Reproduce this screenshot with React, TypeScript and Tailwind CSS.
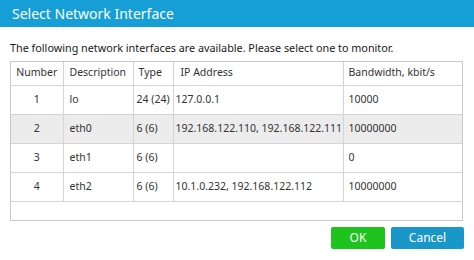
const ROWS = [
  { num: "1", desc: "lo", type: "24 (24)", ip: "127.0.0.1", bw: "10000" },
  { num: "2", desc: "eth0", type: "6 (6)", ip: "192.168.122.110, 192.168.122.111", bw: "10000000" },
  { num: "3", desc: "eth1", type: "6 (6)", ip: "", bw: "0" },
  { num: "4", desc: "eth2", type: "6 (6)", ip: "10.1.0.232, 192.168.122.112", bw: "10000000" },
];

export default function App() {
  return (
    <div className="h-[260px] w-[474px] overflow-hidden bg-white font-['Noto_Sans',sans-serif] text-[#222]">
      {/* Title bar */}
      <div className="flex h-[27px] items-center bg-[#159fd6] pl-[12px] text-[14px] text-white">
        Select Network Interface
      </div>

      <div className="px-[10px]">
        <p className="mt-[13px] text-[10.8px] leading-[16px] text-[#1a1a1a]">
          The following network interfaces are available. Please select one to monitor.
        </p>

        {/* Table */}
        <div className="mt-[5px] h-[160px] w-[453px] border border-[#c9c9c9]">
          <table className="w-full table-fixed border-collapse whitespace-nowrap text-[10.5px] text-[#333]">
            <thead>
              <tr className="h-[23px]">
                <th className="w-[52px] border-r border-b border-[#d4d4d4] text-center font-normal">Number</th>
                <th className="w-[70px] border-r border-b border-[#d4d4d4] pl-[6px] text-left font-normal">Description</th>
                <th className="w-[40px] border-r border-b border-[#d4d4d4] pl-[5px] text-left font-normal">Type</th>
                <th className="w-[170px] border-r border-b border-[#d4d4d4] pl-[7px] text-left font-normal">IP Address</th>
                <th className="border-b border-[#d4d4d4] pl-[5px] text-left font-normal">Bandwidth, kbit/s</th>
              </tr>
            </thead>
            <tbody>
              {ROWS.map((r) => (
                <tr key={r.num} className={`h-[29px] ${r.num === "2" ? "bg-[#ececec]" : ""}`}>
                  <td className="border-r border-b border-[#d4d4d4] text-center">{r.num}</td>
                  <td className="border-r border-b border-[#d4d4d4] pl-[6px]">{r.desc}</td>
                  <td className="border-r border-b border-[#d4d4d4] pl-[3px]">{r.type}</td>
                  <td className="border-r border-b border-[#d4d4d4] pl-[2px]">{r.ip}</td>
                  <td className="border-b border-[#d4d4d4] pl-[5px]">{r.bw}</td>
                </tr>
              ))}
            </tbody>
          </table>
        </div>

        {/* Buttons */}
        <div className="mt-[6px] flex justify-end gap-[6px]">
          <button className="h-[22px] w-[54px] rounded-[2px] bg-[#1ec31e] text-[12px] text-white">OK</button>
          <button className="h-[22px] w-[73px] rounded-[2px] bg-[#1a97c9] text-[12px] text-white">Cancel</button>
        </div>
      </div>
    </div>
  );
}
